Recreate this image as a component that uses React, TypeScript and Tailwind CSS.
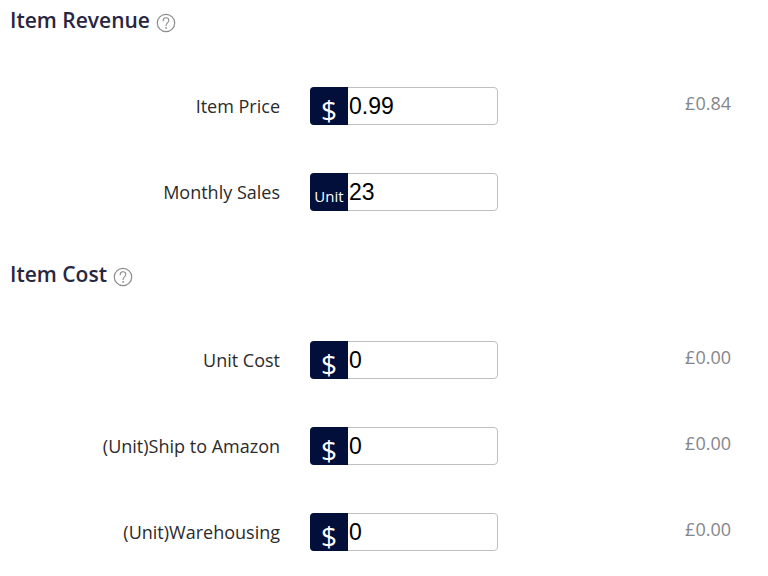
interface Field {
  id: string;
  label: string;
  prefix: string;
  value: string;
  total?: string;
}

interface SectionProps {
  title: string;
  fields: Field[];
}

const revenueFields: Field[] = [
  { id: "item-price", label: "Item Price", prefix: "$", value: "0.99", total: "£0.84" },
  { id: "monthly-sales", label: "Monthly Sales", prefix: "Unit", value: "23" },
];

const costFields: Field[] = [
  { id: "unit-cost", label: "Unit Cost", prefix: "$", value: "0", total: "£0.00" },
  { id: "ship-to-amazon", label: "(Unit)Ship to Amazon", prefix: "$", value: "0", total: "£0.00" },
  { id: "warehousing", label: "(Unit)Warehousing", prefix: "$", value: "0", total: "£0.00" },
];

function HelpIcon() {
  return (
    <svg className="h-5 w-5" viewBox="0 0 20 20" fill="none" stroke="currentColor">
      <circle cx="10" cy="10" r="8.7" strokeWidth="1.2" />
      <path d="M7.2 7.7c0-1.8 1.2-2.9 2.8-2.9s2.8 1 2.8 2.6c0 1.2-.7 1.8-1.4 2.5-.8.7-1.3 1.3-1.3 2.6" strokeWidth="1.1" strokeLinecap="round" />
      <circle cx="10.1" cy="14.9" r="0.9" fill="currentColor" stroke="none" />
    </svg>
  );
}

function FieldRow({ field }: { field: Field }) {
  return (
    <div className="flex items-center">
      <label htmlFor={field.id} className="w-[280px] shrink-0 text-right text-lg leading-6 text-[#2b2b2b]">
        {field.label}
      </label>
      <div className="ml-[30px] flex h-[38px] w-[188px] rounded border border-[#bfbfbf] bg-white">
        <span
          className={`-my-px -ml-px flex w-[38px] shrink-0 justify-center rounded-l bg-[#020f3b] text-white ${
            field.prefix === "$" ? "pt-[9px] text-[28px] leading-7 font-medium" : "pt-[11px] text-[15px] leading-6"
          }`}
        >
          {field.prefix}
        </span>
        <input
          id={field.id}
          type="text"
          defaultValue={field.value}
          className="min-w-0 flex-1 bg-transparent pl-px text-[23px] leading-8 text-black outline-none font-['Liberation_Sans',Arial,sans-serif]"
        />
      </div>
      {field.total && (
        <span className="mb-1.5 ml-auto pr-[37px] text-lg leading-6 text-[#85868b]">{field.total}</span>
      )}
    </div>
  );
}

function Section({ title, fields }: SectionProps) {
  return (
    <section>
      <div className="flex h-10 items-center gap-1.5 pl-2.5">
        <h2 className="text-[21px] leading-7 font-semibold text-[#29263f]">{title}</h2>
        <button type="button" aria-label={`About ${title}`} className="mt-1.5 text-[#8c8c8c]">
          <HelpIcon />
        </button>
      </div>
      <div className="mt-[47px] flex flex-col gap-12">
        {fields.map((field) => (
          <FieldRow key={field.id} field={field} />
        ))}
      </div>
    </section>
  );
}

export default function App() {
  return (
    <main className="flex flex-col gap-[43px] bg-white font-['Open_Sans','Noto_Sans',sans-serif]">
      <Section title="Item Revenue" fields={revenueFields} />
      <Section title="Item Cost" fields={costFields} />
    </main>
  );
}
